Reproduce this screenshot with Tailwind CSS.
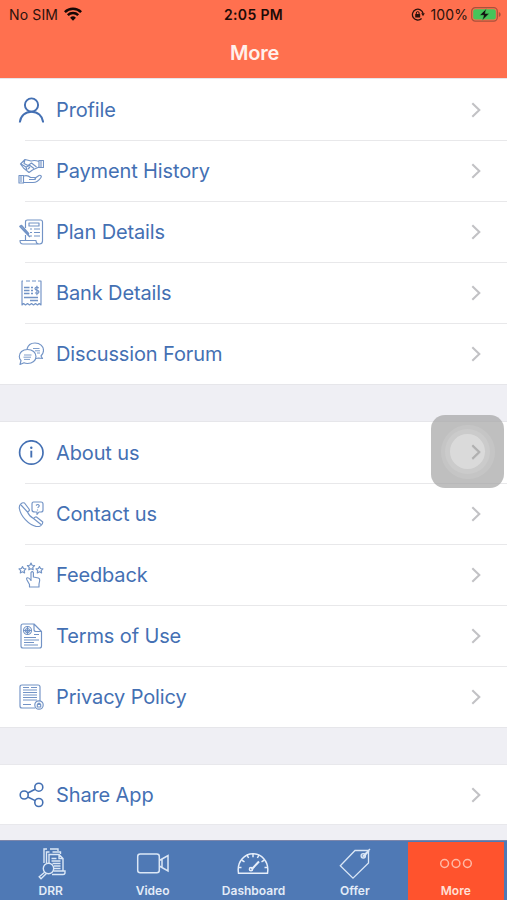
<!DOCTYPE html>
<html lang="en">
<head>
  <meta charset="UTF-8" />
  <meta name="viewport" content="width=device-width, initial-scale=1.0" />
  <title>More</title>
  <script src="https://cdn.jsdelivr.net/npm/@tailwindcss/browser@4"></script>
</head>
<body class="bg-[#efeff4] font-['Inter','Liberation_Sans',sans-serif]">

<div class="relative flex h-[900px] w-[507px] flex-col overflow-hidden">

  <!-- Status bar + title -->
  <header class="h-[79px] shrink-0 bg-[#ff704f]">
    <div class="grid h-7 grid-cols-3 items-center pl-[9px] pr-[6px] text-[14px] text-[#2b120c]">
      <div class="flex items-center gap-[6px]">
        <span class="tracking-[0.15px]">No SIM</span>
        <svg class="h-[14px] w-[18px]" viewBox="0 0 18 14" fill="none" stroke="#150806" stroke-width="2.5">
          <path d="M.9 5.1a11.5 11.5 0 0 1 16.2 0M3.8 8.2a7.4 7.4 0 0 1 10.4 0" />
          <path d="M9 13.8 6.1 10.8a4.1 4.1 0 0 1 5.8 0Z" fill="#150806" stroke="none" />
        </svg>
      </div>
      <div class="-ml-[3px] text-center font-semibold tracking-[0.35px] text-[#1c0b07]">2:05 PM</div>
      <div class="flex items-center justify-end">
        <svg class="mr-[5px] h-[13px] w-[14px]" viewBox="0 0 14 13" fill="none" stroke="#2b120c" stroke-width="1.3">
          <path d="M10.6 10.5A5.4 5.4 0 1 1 12.1 5.5" />
          <path d="M10.2 5.3h3.6L12 8.2Z" fill="#2b120c" stroke="none" />
          <rect x="4.2" y="6" width="5" height="3.6" rx=".5" fill="#2b120c" stroke="none" />
          <path d="M5.3 6.2V5a1.4 1.4 0 0 1 2.8 0v1.2" stroke-width="1" />
        </svg>
        <span class="mr-[3px] tracking-[0.1px]">100%</span>
        <svg class="h-[15px] w-[30px]" viewBox="0 0 30 15">
          <rect x=".7" y=".7" width="25.6" height="13.4" rx="3.6" fill="none" stroke="#a9513c" stroke-width="1.2" />
          <rect x="2.2" y="2.2" width="22.6" height="10.4" rx="2" fill="#46c45a" />
          <path d="M27.8 5v5c1.2-.4 1.9-1.3 1.9-2.5S29 5.4 27.8 5Z" fill="#a9513c" />
          <path d="M15.3 1.7 8.7 8.300h4l-1.300 5 6.800-6.900h-4.100Z" fill="#111" stroke="#46c45a" stroke-width=".5" />
        </svg>
      </div>
    </div>
    <h1 class="pt-[10px] pl-[2px] text-center text-[20px] leading-[30px] font-semibold tracking-[-0.2px] text-[#fff1ec]">More</h1>
  </header>

  <main class="flex flex-1 flex-col text-[#4470b3]">
    <section id="account" class="bg-white shadow-[0_0_0_1px_#e6e6ea]"></section>
    <div class="h-[38px]"></div>
    <section id="info" class="bg-white shadow-[0_0_0_1px_#e6e6ea]"></section>
    <div class="h-[38px]"></div>
    <section id="share" class="flex h-[59px] flex-col justify-center bg-white shadow-[0_0_0_1px_#e8e8ec]"></section>
  </main>

  <!-- Tab bar -->
  <nav class="z-10 grid h-[60px] shrink-0 grid-cols-5 border-t border-[#7c86ab] bg-[#4f79b5] text-center text-[12px] font-semibold text-[#e3ecf8]">
    <a class="flex flex-col items-center pt-[5px]">
      <svg class="h-[34px] w-[34px]" viewBox="0 0 34 34" fill="none" stroke="#dbe7f6" stroke-width="1.4">
        <path d="M10 17V3h3m3 0h8v2M12.5 17V6h3m3 0h8v2M15 17V8.5h10l4 4V25M25 8.5v4h4" />
        <path d="M17.5 12.5h5M17.5 15h9M18.5 17.5h8M20 20h6.5M20 22.5h6.5M19.5 25H31v1.500q0 2-2 2H18" />
        <circle cx="14.5" cy="22.5" r="5.2" />
        <path d="m10.7 26.200-5.500 4.600 1.800 1.900 5.400-5.200" />
      </svg>
      <span class="mt-[2px] leading-[17px]">DRR</span>
    </a>
    <a class="flex flex-col items-center pt-[5px] pl-px">
      <svg class="h-[34px] w-[34px]" viewBox="0 0 34 34" fill="none" stroke="#dbe7f6" stroke-width="1.5">
        <rect x="1.7" y="8" width="21.600" height="18.800" rx="2.500" />
        <path d="M23.300 14.500 32 9.500v15.500l-8.700-5M26 13v8.500" />
      </svg>
      <span class="mt-[2px] leading-[17px]">Video</span>
    </a>
    <a class="flex flex-col items-center pt-[5px]">
      <svg class="h-[34px] w-[34px]" viewBox="0 0 34 34" fill="none" stroke="#e6eefa" stroke-width="1.5">
        <path d="M2.500 27.200c-1-6 .3-10.600 3.700-14.400C12 6.100 22 6.100 27.800 12.800c3.400 3.800 4.700 8.400 3.700 14.400Z" />
        <path d="M2 21.500h3.500M28.500 21.500H32M5.500 14l3 1.800M28.500 14l-3 1.800M11 9l1.600 3M17 7.800v3.400M23 9l-1.600 3" />
        <path d="m15.500 23.500 7.500-8" stroke-width="2" />
        <circle cx="15" cy="23.200" r="1.600" />
      </svg>
      <span class="mt-[2px] leading-[17px]">Dashboard</span>
    </a>
    <a class="flex flex-col items-center pt-[5px]">
      <svg class="h-[34px] w-[34px]" viewBox="0 0 34 34" fill="none" stroke="#dbe7f6" stroke-width="1.3">
        <path d="M17 4.500h13.500V17L15 32.200 2.300 19.800Z" />
        <circle cx="25.300" cy="9.800" r="2.200" />
        <path d="M24.500 10.500 32 3M25.500 11 31 5" />
      </svg>
      <span class="mt-[2px] leading-[17px]">Offer</span>
    </a>
    <a class="mt-px mr-[3px] ml-[2px] flex flex-col items-center bg-[#ff532d] pt-[4px] text-[#ffe0d6]">
      <svg class="h-[34px] w-[34px]" viewBox="0 0 34 34" fill="none" stroke="#ffb9a5" stroke-width="1.5">
        <circle cx="5.600" cy="17.500" r="3.900" />
        <circle cx="17" cy="17.500" r="3.900" />
        <circle cx="28.400" cy="17.500" r="3.900" />
      </svg>
      <span class="mt-[2px] leading-[17px]">More</span>
    </a>
  </nav>

  <!-- AssistiveTouch button -->
  <div class="absolute top-[415px] left-[431px] flex h-[73px] w-[73px] items-center justify-center rounded-[14px] bg-[#a4a4a4]/70">
    <div class="flex h-[54px] w-[54px] items-center justify-center rounded-full bg-white/10">
      <div class="flex h-[45px] w-[45px] items-center justify-center rounded-full bg-white/10">
        <div class="flex h-[35px] w-[35px] items-center justify-end rounded-full bg-white/30 pr-[4px]">
          <svg class="h-4 w-[10px]" viewBox="0 0 10 16" fill="none" stroke="#b0b0b0" stroke-width="2.1"><path d="m1.3 1.2 7 6.8-7 6.8"/></svg>
        </div>
      </div>
    </div>
  </div>
</div>

<script>
  // 26x26 line icons
  const icons = {
    profile: `<g stroke-width="1.9"><circle cx="13.5" cy="8" r="6.600"/><path d="M1.800 25.500C2.500 18.500 7.500 14.700 13.500 14.700S24.500 18.500 25.200 25.500"/></g>`,
    payment: `<path d="M21 2.500h4.500v7H21ZM21 3.500c-3-1.200-5-1.500-8-.5L7 1.500 2.500 6 5.500 10l5.500 4.500L14.500 12l6.500-3M7 1.500l-1 4 4 2 3.500-2.500 5 4M3 6 8 9l4-1.500 4 3M8 9l1 3M10 11l2-2"/><path d="M1 17.500h4.500V25H1ZM5.500 18c3-1 5-.5 7 1.500h4c1.500 0 1.500 2 0 2H11M16.500 20.500 21 17.500c1.500-.7 3 .7 2 2-2 3-5 5-8 5H5.500M3 18v6M23 3v6"/>`,
    plan: `<path d="M7.500 9V3q0-2 2-2H22.500q2 0 2 2V22q0 3-3 3M7.500 16v5M21.500 25H5q-3 0-3-3.500H18q0 3.500 3.500 3.500M11 4h10v3H11ZM12 10h2M16 10h6M12 13.500h2M16 13.500h6M12 17h2M16 17h6" /><path d="m2 7.500 8 8.500.5-1.500L3.500 6.500ZM10 16l2 2" stroke-width="1.600"/>`,
    bank: `<path d="M5 1H4v24l1.600-1.500L7.500 25l2-1.500 2 1.500 2-1.500 2 1.500 2-1.500 2 1.500 1.700-1.500L23 25V1h-3M8 1h4M14 1h4"/><path d="M6 7.500h5.500M6 10.500h5.500M6 13.500h5.500M13 7.500h2M13 10.500h2M13 13.500h2M6 17.500h14M12 20.500h8" stroke-width="1.300"/><path d="M20.800 8q-3.300-1.800-3.800.5 0 1.500 1.900 1.800 2.200.4 1.900 2-.6 2-3.800.5M18.900 5.800v9.400" stroke-width="1.200"/>`,
    forum: `<path d="M9 8C10 4 13 2 17 2c5 0 8.500 3.200 8.500 7.500 0 2.500-1 4-2.500 5.500l1.500 2.500-4-.5-2.500.5"/><path d="M9.500 8.500c5 0 8.500 3 8.500 7s-3.500 7-8.500 7c-1.500 0-2.500-.2-3.500-.7L2 23.500l1-4C1.700 18.300 1.300 17 1.300 15.500c0-4 3.200-7 8.200-7Z"/><path d="M6 14h7.500M5.500 16.200h7.500M6 18.400h6M15 7.500h6.500M17 9.800h5M19 12h3" stroke-width=".9"/>`,
    about: `<circle cx="13.300" cy="12.500" r="11.700" stroke-width="1.700"/><path d="M13.300 10.700v6.800" stroke-width="1.900"/><circle cx="13.300" cy="7.700" r="1.200" fill="#4470b3" stroke="none"/>`,
    contact: `<path d="M6.500 2C4 1 1 3.500 1.300 7c1 8 9.500 17 17 18.500 3.500.7 6.500-1.500 6.500-4.500L18.500 16c-1-.7-2 .5-3 1.500-3-1.500-5-4-6-6.500 1.500-1 2.500-1.500 1.500-3ZM3 4l6.500 7M15.500 17.500l7.500 6"/><path d="M15.500 1H23q2 0 2 2v6q0 2-2 2h-2l-2 2.500V11h-2q-3 0-3-2V3q0-2 1.500-2Z"/><path d="M18 4.500q2-2 3.200 0 .3 1-1.600 2.300M19.500 8.500v1"/>`,
    feedback: `<path d="m4.500 4.500 1 2 2.400.3-1.700 1.700.4 2.400-2.100-1.100-2.200 1.100.4-2.400L1 6.800l2.400-.3ZM13 1l1.100 2.200 2.500.3-1.800 1.800.4 2.500L13 6.700l-2.200 1.100.4-2.500-1.800-1.800 2.500-.3ZM21.500 4.500l1 2 2.400.3-1.700 1.700.4 2.400-2.100-1.100-2.200 1.100.4-2.400L18 6.800l2.400-.3Z"/><path d="M13 19v-8.500q1.200-1.700 2.400 0V15l5 1q1.600.5 1.300 2.500L21 22v3h-9.500v-2.500L9 18q-1-2 .5-2.200T13 18.500"/>`,
    terms: `<path d="M16 1H5Q3 1 3 3v20q0 2 2 2h16.500q2 0 2-2V8.500ZM16 1v5.500q0 2 2 2h5.500"/><circle cx="9.500" cy="7.500" r="4"/><circle cx="9.500" cy="7.500" r="2"/><path d="M9.500 3v9M5 7.500h9M16 11.500h5M6 14.500h12M6 17h15M6 19.500h10M6 22h14"/>`,
    privacy: `<path d="M17 24H4q-2 0-2-2V3q0-2 2-2h16q2 0 2 2v14"/><path d="M5 3.500h6M13 3.500h6M5 6h14M5 8.500h14M5 11h14M5 13.500h14M5 16h14M5 20.500h8" stroke-width="1"/><circle cx="21" cy="21" r="4.200"/><path d="M19.300 20.500h3.400V23h-3.400ZM20 20.500v-1.200h2v1.200"/>`,
    share: `<g stroke-width="1.6"><circle cx="6.200" cy="13" r="4"/><circle cx="20.800" cy="5.200" r="4"/><circle cx="20.800" cy="20.500" r="4"/><path d="m9.800 11 7.400-3.800M9.800 15l7.400 3.600"/></g>`
  };

  function renderRows(id, rows) {
    document.getElementById(id).innerHTML = rows.map(([icon, label, faint], i) => `
      <a class="relative flex h-[61px] items-center pl-[18px] pr-[26px]">
        <svg class="h-[26px] w-[26px] shrink-0 ${faint ? 'opacity-75' : ''}" viewBox="0 0 26 26" fill="none" stroke="#4470b3" stroke-width="1.15" stroke-linejoin="round">${icons[icon]}</svg>
        <span class="ml-3 flex-1 text-[20px] tracking-[-0.13px]">${label}</span>
        <svg class="h-4 w-[10px]" viewBox="0 0 10 16" fill="none" stroke="#c2c2c5" stroke-width="2.1"><path d="m1.3 1.2 7 6.8-7 6.8"/></svg>
        ${i < rows.length - 1 ? '<span class="absolute right-0 -bottom-px left-[25px] h-px bg-[#e8e8ea]"></span>' : ''}
      </a>`).join('');
  }

  renderRows('account', [
    ['profile', 'Profile'],
    ['payment', 'Payment History', true],
    ['plan', 'Plan Details', true],
    ['bank', 'Bank Details', true],
    ['forum', 'Discussion Forum', true]
  ]);
  renderRows('info', [
    ['about', 'About us'],
    ['contact', 'Contact us', true],
    ['feedback', 'Feedback', true],
    ['terms', 'Terms of Use', true],
    ['privacy', 'Privacy Policy', true]
  ]);
  renderRows('share', [['share', 'Share App']]);
</script>

</body>
</html>
